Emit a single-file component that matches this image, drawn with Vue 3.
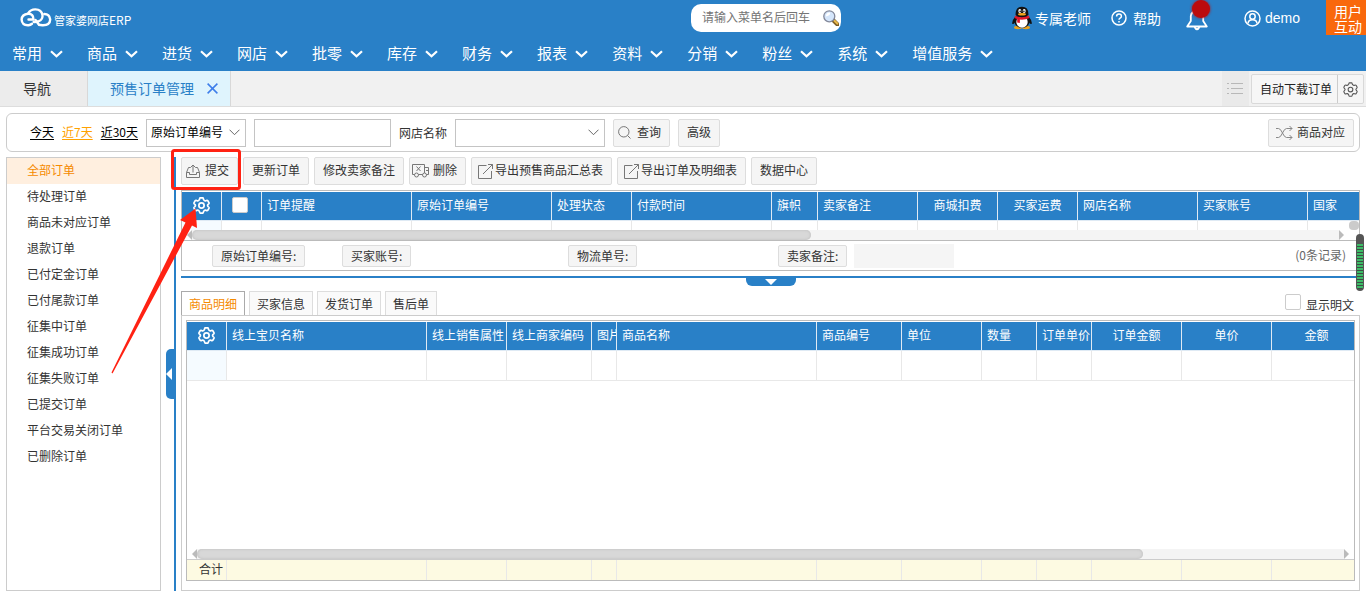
<script setup>
import { ref } from 'vue'

const menus = ['常用', '商品', '进货', '网店', '批零', '库存', '财务', '报表', '资料', '分销', '粉丝', '系统', '增值服务']

const statuses = [
  '全部订单', '待处理订单', '商品未对应订单', '退款订单', '已付定金订单', '已付尾款订单',
  '征集中订单', '征集成功订单', '征集失败订单', '已提交订单', '平台交易关闭订单', '已删除订单'
]
const activeStatus = ref('全部订单')

const orderColumns = [
  { title: '订单提醒', cls: 'w150' },
  { title: '原始订单编号', cls: 'w140' },
  { title: '处理状态', cls: 'w80' },
  { title: '付款时间', cls: 'w140' },
  { title: '旗帜', cls: 'w46' },
  { title: '卖家备注', cls: 'w100' },
  { title: '商城扣费', cls: 'w80', center: true },
  { title: '买家运费', cls: 'w80', center: true },
  { title: '网店名称', cls: 'w120' },
  { title: '买家账号', cls: 'w110' },
  { title: '国家', cls: 'w90' }
]

const detailColumns = [
  { title: '线上宝贝名称', cls: 'w200' },
  { title: '线上销售属性', cls: 'w80' },
  { title: '线上商家编码', cls: 'w85' },
  { title: '图片', cls: 'w25' },
  { title: '商品名称', cls: 'w200' },
  { title: '商品编号', cls: 'w85' },
  { title: '单位', cls: 'w80' },
  { title: '数量', cls: 'w55' },
  { title: '订单单价', cls: 'w55' },
  { title: '订单金额', cls: 'w90', center: true },
  { title: '单价', cls: 'w90', center: true },
  { title: '金额', cls: 'w90', center: true }
]

const detailTabs = ['商品明细', '买家信息', '发货订单', '售后单']
const activeTab = ref('商品明细')
const gearPath = 'M7.500 1H10.500Q11 1 11.200 2.800Q12.200 4.500 14 3.800Q15.200 3.300 15.700 4L17 6.300Q17.200 7 16 7.800Q14.900 9 16 10.200Q17.200 11 17 11.700L15.700 14Q15.200 14.700 14 14.200Q12.200 13.500 11.200 15.200Q11 17 10.500 17H7.500Q7 17 6.800 15.200Q5.800 13.500 4 14.200Q2.800 14.700 2.300 14L1 11.700Q.8 11 2 10.200Q3.100 9 2 7.800Q.8 7 1 6.300L2.300 4Q2.800 3.300 4 3.800Q5.800 4.500 6.800 2.800Q7 1 7.500 1Z'
</script>

<template>
  <div class="page">
    <header class="header">
      <div class="top">
        <a class="brand" href="#">
          <svg width="32" height="20" viewBox="0 0 32 20" fill="none" stroke="#fff" stroke-width="2.400" stroke-linecap="round">
            <path d="M8.500 11.500H13.500Q13.500 5.500 8 5.800Q2 6.400 1.600 11.500Q2 17.500 8.500 17.200Q10.500 17 12 15.800" />
            <path d="M8.200 5.400Q10.500 1.300 15.400 1.400Q21.500 1.600 22.500 7Q23 11.500 18.800 13.200Q15 14.600 13.600 14" />
            <path d="M15.500 12 19 16.800 22.500 17.200Q30 17.400 30.200 11.500Q29.600 6 24.300 6" />
          </svg>
          <span>管家婆网店<b>ERP</b></span>
        </a>
        <div class="finder">
          <input type="text" placeholder="请输入菜单名后回车" aria-label="菜单搜索">
          <button aria-label="搜索">
            <svg width="16" height="16" viewBox="0 0 16 16">
              <path d="m10.500 10.500 4 4" stroke="#7a5b24" stroke-width="4" stroke-linecap="round" />
              <path d="m11.500 10.800 2.800 2.700" stroke="#e9b84a" stroke-width="2.200" stroke-linecap="round" />
              <circle cx="6.300" cy="6.300" r="5.500" fill="#d5e6fb" stroke="#83889a" stroke-width="1.300" />
              <path d="M3 6.500A3.500 3.500 0 0 1 7 2.600Q8 5.500 3 6.500Z" fill="#fff" />
            </svg>
          </button>
        </div>
        <div class="account">
          <a href="#" class="teacher">
            <svg width="20" height="24" viewBox="0 0 20 24">
              <ellipse cx="6" cy="21.500" rx="4" ry="1.700" fill="#eca21c" />
              <ellipse cx="14" cy="21.500" rx="4" ry="1.700" fill="#eca21c" />
              <path d="M3 11Q-.5 15 .4 18Q1.500 18.500 3 16.500ZM17 11Q20.500 15 19.600 18Q18.500 18.500 17 16.500Z" fill="#111" />
              <ellipse cx="10" cy="15" rx="7.600" ry="7" fill="#111" />
              <ellipse cx="10" cy="16" rx="5.700" ry="5.800" fill="#fff" />
              <path d="M3.600 9Q3.200 .8 10 .8Q16.800 .8 16.400 9Q13 12 10 12Q7 12 3.600 9Z" fill="#111" />
              <ellipse cx="7.800" cy="5" rx="1.500" ry="2" fill="#fff" /><ellipse cx="12.200" cy="5" rx="1.500" ry="2" fill="#fff" />
              <circle cx="8.200" cy="5.200" r=".8" /><circle cx="11.900" cy="5.200" r=".8" />
              <ellipse cx="10" cy="8.300" rx="4" ry="1.200" fill="#f4a51c" />
              <path d="M3 9.500Q10 13 17 9.500L17.500 12Q10 15.500 2.500 12Z" fill="#e3162a" />
              <path d="M5.200 12.500 8 13.300 7.800 17 5.200 16.500Z" fill="#e3162a" />
            </svg>
            专属老师
          </a>
          <a href="#" class="help">
            <svg width="16" height="16" viewBox="0 0 16 16" fill="none" stroke="#fff" stroke-width="1.500">
              <circle cx="8" cy="8" r="7" />
              <path d="M5.600 6.400Q5.600 4 8 4Q10.400 4 10.400 6.200Q10.400 7.300 9.100 8.100Q8 8.800 8 9.800M8 11v1.600" />
            </svg>
            帮助
          </a>
          <a href="#" class="bell" aria-label="消息">
            <svg width="22" height="22" viewBox="0 0 22 22" fill="none" stroke="#fff" stroke-width="1.800" stroke-linejoin="round">
              <path d="M1.200 17.500 4.800 12V7Q5.500 2 11 2Q16.500 2 17.200 7V12L20.800 17.500Z" />
              <path d="M8.500 18Q11 22.500 13.500 18" />
            </svg>
            <i></i>
          </a>
          <a href="#" class="user">
            <svg width="17" height="17" viewBox="0 0 17 17" fill="none" stroke="#fff" stroke-width="1.500">
              <circle cx="8.500" cy="8.500" r="7.500" /><circle cx="8.500" cy="6.500" r="2.700" />
              <path d="M4 13.500Q4.300 9.700 8.500 9.700Q12.700 9.700 13 13.500" />
            </svg>
            demo
          </a>
          <a href="#" class="interact">用户互动</a>
        </div>
      </div>
      <nav class="menu">
        <a v-for="m in menus" :key="m" href="#">
          {{ m }}
          <svg width="13" height="8" viewBox="0 0 13 8" fill="none" stroke="#fff" stroke-width="2.200"><path d="m1 1.200 5.500 5L12 1.200" /></svg>
        </a>
      </nav>
    </header>

    <div class="pagetabs">
      <a class="ptab" href="#">导航</a>
      <div class="ptab current">
        <a href="#">预售订单管理</a>
        <button aria-label="关闭">
          <svg width="11" height="11" viewBox="0 0 11 11" stroke="#3d7eea" stroke-width="1.500"><path d="m.6.600 9.800 9.800M10.400.600.600 10.400" /></svg>
        </button>
      </div>
      <button class="list" aria-label="列表">
        <svg width="16" height="11" viewBox="0 0 16 11" stroke="#b8b8b8"><path d="M0 .5h2M4 .5h12M0 5.500h2M4 5.500h12M0 10.500h2M4 10.500h12" /></svg>
      </button>
      <div class="auto">
        <button>自动下载订单</button>
        <button class="gear" aria-label="设置">
          <svg width="15" height="15" viewBox="0 0 18 18" fill="none" stroke="#555" stroke-width="1.300" stroke-linejoin="round"><path :d="gearPath" /><circle cx="9" cy="9" r="2.800" /></svg>
        </button>
      </div>
    </div>

    <form class="query" @submit.prevent>
      <a href="#">今天</a>
      <a href="#" class="on">近7天</a>
      <a href="#">近30天</a>
      <div class="pick short">
        <select aria-label="查询字段"><option>原始订单编号</option></select>
        <svg width="11" height="7" viewBox="0 0 11 7" fill="none" stroke="#666"><path d="m.5.700 5 5 5-5" /></svg>
      </div>
      <input class="keyword" type="text" aria-label="查询内容">
      <label for="shop">网店名称</label>
      <div class="pick">
        <select id="shop"><option></option></select>
        <svg width="11" height="7" viewBox="0 0 11 7" fill="none" stroke="#666"><path d="m.5.700 5 5 5-5" /></svg>
      </div>
      <button class="btn search">
        <svg width="13" height="13" viewBox="0 0 13 13" fill="none" stroke="#777"><circle cx="5.800" cy="5.800" r="5.200" /><path d="m9.500 9.500 3 3" /></svg>
        查询
      </button>
      <button class="btn" type="button">高级</button>
      <button class="btn match" type="button">
        <svg width="17" height="14" viewBox="0 0 17 14" fill="none" stroke="#888"><path d="M0 2.500H2.500Q4.500 2.500 6.500 7Q8.500 11.500 10.500 11.500H16M0 11.500H2.500Q4.500 11.500 6.500 7Q8.500 2.500 10.500 2.500H16M13.500 0 16 2.500 13.500 5M13.500 9 16 11.500 13.500 14" /></svg>
        商品对应
      </button>
    </form>

    <div class="body">
      <aside class="side">
        <a v-for="s in statuses" :key="s" href="#" :class="{ on: s === activeStatus }" @click.prevent="activeStatus = s">{{ s }}</a>
      </aside>
      <div class="vsplit">
        <button aria-label="收起侧栏"><svg width="6" height="12" viewBox="0 0 6 12"><path d="M6 0v12L0 6Z" fill="#fff" /></svg></button>
      </div>

      <main class="main">
        <div class="toolbar">
          <button class="btn submit">
            <svg width="14" height="14" viewBox="0 0 14 14" fill="none" stroke="#777"><path d="M4.500 3.500H2.500L.500 8.500V13.500H13.500V8.500L11.500 3.500H9.500M.500 8.500H3.500V10.500H10.500V8.500H13.500M7 8.500V1M4.500 3.500 7 1l2.500 2.500" /></svg>
            提交
          </button>
          <button class="btn">更新订单</button>
          <button class="btn">修改卖家备注</button>
          <button class="btn remove">
            <svg width="18" height="14" viewBox="0 0 18 14" fill="none" stroke="#777"><path d="M2.500 10.500H.500V.500H12.500V9M12.500 3.500H16.500V10.500H14.500M4.500 2.500l4 4.500M8.500 2.500l-4 4.500M14 6.500h2.500M6.500 10.500h4" /><circle cx="4.500" cy="11" r="2" /><circle cx="12.500" cy="11" r="2" /></svg>
            删除
          </button>
          <button v-for="t in ['导出预售商品汇总表', '导出订单及明细表']" :key="t" class="btn export">
            <svg width="15" height="15" viewBox="0 0 15 15" fill="none" stroke="#777"><path d="M8.500 1.500H.500V14.500H13.500V7M5 10 14.500.500M10 .500H14.500V5" /></svg>
            {{ t }}
          </button>
          <button class="btn">数据中心</button>
        </div>

        <section class="grid orders">
          <div class="clip">
            <table>
              <thead>
                <tr>
                  <th class="w40"><svg width="17" height="17" viewBox="0 0 18 18" fill="none" stroke="#fff" stroke-width="1.800" stroke-linejoin="round"><path :d="gearPath" /><circle cx="9" cy="9" r="2.800" /></svg></th>
                  <th class="w40"><input type="checkbox" aria-label="全选"></th>
                  <th v-for="c in orderColumns" :key="c.title" :class="[c.cls, { mid: c.center }]">{{ c.title }}</th>
                </tr>
              </thead>
              <tbody><tr><td class="lead"></td><td></td><td v-for="c in orderColumns" :key="c.title"></td></tr></tbody>
            </table>
            <span class="vthumb"></span>
          </div>
          <div class="hscroll">
            <i class="left"></i><div class="track"><div class="thumb"></div></div><i class="right"></i>
          </div>
        </section>
        <div class="info">
          <div><button class="btn">原始订单编号:</button></div>
          <div><button class="btn">买家账号:</button></div>
          <div><button class="btn">物流单号:</button></div>
          <div class="memo"><label class="btn" for="memo">卖家备注:</label><input id="memo" type="text"></div>
          <span>(0条记录)</span>
        </div>

        <div class="hsplit">
          <button aria-label="收起明细"><svg width="12" height="6" viewBox="0 0 12 6"><path d="M0 0h12L6 6Z" fill="#fff" /></svg></button>
        </div>

        <div class="dtabs">
          <button v-for="t in detailTabs" :key="t" :class="{ on: t === activeTab }" @click="activeTab = t">{{ t }}</button>
          <label><input type="checkbox"><span>显示明文</span></label>
        </div>
        <section class="panel">
          <div class="grid detail">
            <div class="clip">
              <table>
                <thead>
                  <tr>
                    <th class="w40"><svg width="17" height="17" viewBox="0 0 18 18" fill="none" stroke="#fff" stroke-width="1.800" stroke-linejoin="round"><path :d="gearPath" /><circle cx="9" cy="9" r="2.800" /></svg></th>
                    <th v-for="c in detailColumns" :key="c.title" :class="[c.cls, { mid: c.center }]">{{ c.title }}</th>
                  </tr>
                </thead>
                <tbody><tr><td class="lead"></td><td v-for="c in detailColumns" :key="c.title"></td></tr></tbody>
              </table>
            </div>
            <div class="hscroll">
              <i class="left"></i><div class="track"><div class="thumb"></div></div><i class="right"></i>
            </div>
            <div class="total">
              <table>
                <tbody><tr><td class="w40">合计</td><td v-for="c in detailColumns" :key="c.title" :class="c.cls"></td></tr></tbody>
              </table>
            </div>
          </div>
        </section>
      </main>
    </div>

    <div class="meter"></div>
    <svg class="marks" width="245" height="380" viewBox="0 0 245 380">
      <rect x="172.500" y="150.500" width="67" height="38" rx="2" fill="none" stroke="#ff2213" stroke-width="3" />
      <path d="M195.500 208.500 197 228 192 225.500 112.500 373.500 111.500 372.500 185.500 222.500 180 220Z" fill="#ff2213" />
    </svg>
  </div>
</template>

<style>
body {
  margin: 0;
  background: #fff;
}
</style>

<style scoped>
.page {
  position: relative;
  display: flex;
  flex-direction: column;
  min-height: 100vh;
  overflow: hidden;
  font: 12px/18px "Noto Sans CJK SC", "Liberation Sans", sans-serif;
  color: #333;
}
.page *, .page { box-sizing: border-box; }
a { color: inherit; text-decoration: none; }
button, input, select { font: inherit; color: inherit; margin: 0; padding: 0; border: 0; background: none; }
button { white-space: nowrap; }
svg { display: block; flex: none; }

.header { background: #2980c7; color: #fff; }
.top { display: grid; grid-template-columns: 691fr 150px 525fr; height: 36px; }
.brand { display: flex; align-items: center; gap: 2px; padding-left: 20px; font-size: 11px; }
.brand span { padding-top: 3px; }
.brand b { font-size: 12px; font-weight: 400; }
.finder { display: flex; align-items: center; height: 28px; margin-top: 4px; padding: 0 2px 0 11px; border-radius: 10px; background: #fff; }
.finder input { flex: 1; min-width: 0; padding-bottom: 2px; color: #333; outline: 0; }
.finder input::placeholder { color: #757575; opacity: 1; }
.account { display: flex; align-items: flex-start; justify-content: flex-end; font-size: 14px; line-height: 20px; white-space: nowrap; }
.account a { display: flex; align-items: center; }
.teacher { gap: 3px; margin: 6px 20px 0 0; }
.help { gap: 6px; margin: 8px 25px 0 0; }
.account .bell { position: relative; margin: 9px 36px 0 0; }
.bell i { position: absolute; left: 6px; top: -9px; width: 18px; height: 18px; border-radius: 50%; background: #bb0b0d; box-shadow: 0 0 3px #bb0b0d; }
.user { gap: 4px; margin: 8px 26px 0 0; font-family: "Liberation Sans", sans-serif; }
.account .interact { display: block; width: 40px; height: 35px; padding: 4px 3px 0 8px; line-height: 15px; white-space: normal; background: #f9680c; }
.menu { display: flex; gap: 24px; height: 35px; padding: 0 0 2px 12px; font-size: 15px; line-height: 31px; white-space: nowrap; }
.menu a { display: flex; align-items: center; gap: 8px; }
.menu svg { margin-top: 2px; }

.pagetabs { display: flex; height: 36px; background: #f1f1f1; border-bottom: 1px solid #ddd; font-size: 14px; }
.ptab { display: flex; align-items: center; padding: 0 36px 2px 23px; background: #ececec; border-right: 1px solid #d8d8d8; }
.current { gap: 13px; padding: 0 12px 2px 22px; background: #dff4fd; color: #2980c7; }
.current svg { margin-top: 2px; }
.list { display: flex; align-items: center; justify-content: center; width: 27px; margin-left: auto; background: #eaeaea; }
.auto { display: flex; height: 30px; margin: 3px 2px 0; border: 1px solid #d9d9d9; border-radius: 2px; background: #f6f6f6; font-size: 12px; color: #222; }
.auto button { padding: 0 5px 0 8px; }
.auto .gear { padding: 0 5px; border-left: 1px solid #ccc; }

.query { display: flex; align-items: center; gap: 8px; height: 39px; margin: 6px 6px 5px; padding: 0 5px 0 23px; border: 1px solid #ccc; border-radius: 6px; white-space: nowrap; }
.query > a { padding-bottom: 2px; color: #000; text-decoration: underline; text-underline-offset: 2px; }
.query > a.on { color: #ffa200; }
.pick { position: relative; width: 150px; }
.short { width: 100px; }
.pick select { display: block; width: 100%; height: 28px; padding: 0 3px 2px 4px; border: 1px solid #c4c4c4; appearance: none; background: #fff; color: #000; }
.pick svg { position: absolute; right: 6px; top: 10px; pointer-events: none; }
.keyword { width: 137px; height: 28px; border: 1px solid #c4c4c4; }
.btn { display: flex; align-items: center; height: 28px; padding: 0 8px 2px; border: 1px solid #ddd; border-radius: 2px; background: #f5f5f5; }
.btn svg { margin-top: 2px; }
.search { gap: 6px; padding-left: 4px; }
.match { gap: 4px; margin-left: auto; padding-left: 7px; }

.body { display: flex; flex: 1; padding: 0 6px 6px; }
.side { width: 155px; border: 1px solid #ccc; }
.side a { display: block; padding: 0 0 2px 20px; line-height: 24px; }
.side a.on { background: #ffefdf; color: #f58a00; }
.vsplit { position: relative; width: 2px; margin: 0 5px 0 13px; background: #2980c7; }
.vsplit button { position: absolute; right: 2px; top: 192px; width: 8px; height: 50px; border-radius: 5px 0 0 5px; background: #2980c7; }
.main { display: flex; flex: 1; flex-direction: column; min-width: 0; }
.toolbar { display: flex; gap: 5px; margin-bottom: 5px; }
.submit { gap: 5px; padding-left: 4px; }
.remove { gap: 3px; padding-left: 2px; }
.export { gap: 2px; padding-left: 6px; }

.grid { display: flex; flex-direction: column; border: 1px solid #bbb; }
.clip { position: relative; padding-top: 1px; overflow: hidden; }
.orders .clip { height: 39px; }
table { width: 100%; border-spacing: 0; table-layout: fixed; }
.orders table { width: 1216px; }
.detail table { width: 1175px; }
th, td { height: 30px; padding: 0 0 2px 5px; overflow: hidden; text-align: left; white-space: nowrap; border-right: 1px solid #e8e8e8; border-bottom: 1px solid #e8e8e8; }
th { height: 29px; font-weight: 400; color: #fff; background: #2980c7; border-color: #dfeaf4; }
th input, .dtabs input { display: block; appearance: none; width: 16px; height: 16px; border: 1px solid #ccc; border-radius: 2px; background: #fff; }
th input { margin-left: 5px; }
th svg { margin-left: 6px; }
th.mid { padding-left: 0; text-align: center; }
.lead { background: #f5fbff; }
.w25 { width: 25px; }
.w40 { width: 40px; }
.w46 { width: 46px; }
.w55 { width: 55px; }
.w80 { width: 80px; }
.w85 { width: 85px; }
.w90 { width: 90px; }
.w100 { width: 100px; }
.w110 { width: 110px; }
.w120 { width: 120px; }
.w140 { width: 140px; }
.w150 { width: 150px; }
.w200 { width: 200px; }
.vthumb { position: absolute; right: 0; bottom: 0; width: 10px; height: 9px; border-radius: 4px; background: #cbcbcb; }
.hscroll { display: flex; height: 10px; padding: 0 15px 0 5px; }
.detail .hscroll { margin-top: auto; padding-right: 5px; }
.hscroll i { border: solid transparent; border-width: 5px 0; }
.hscroll .left { border-right: 5px solid #bbb; }
.hscroll .right { border-left: 5px solid #bbb; }
.track { flex: 1; background: #f4f4f4; }
.thumb { width: 54%; height: 10px; border-radius: 5px; background: #d8d8d8; box-shadow: inset 0 0 3px #bbb; }
.detail .thumb { width: 82.500%; }

.info { display: grid; grid-template-columns: 130px 226px 210px 1fr auto; align-items: center; height: 30px; padding: 0 13px 0 30px; border: solid #bbb; border-width: 0 1px 1px; white-space: nowrap; }
.info .btn { height: 22px; padding-bottom: 0; }
.memo { display: flex; align-items: center; gap: 7px; }
.memo input { width: 100px; height: 24px; background: #f5f5f5; }
.info span { padding-bottom: 2px; color: #666; }

.hsplit { position: relative; height: 2px; margin: 5px 0 13px; background: #2980c7; }
.hsplit button { position: absolute; left: calc(50% - 25px); top: 2px; display: flex; justify-content: center; width: 50px; height: 8px; margin-left: -1px; padding-top: 1px; border-radius: 0 0 6px 6px; background: #2980c7; transform: translateX(0); }
.hsplit button { left: 48%; }

.dtabs { display: flex; gap: 4px; height: 24px; }
.dtabs button { padding: 0 7px; border: 1px solid #ddd; border-bottom: 0; background: #fafafa; }
.dtabs button.on { border-color: #aaa; background: #fff; color: #f58a00; }
.dtabs label { display: flex; align-items: flex-start; gap: 5px; margin: 3px 6px 0 auto; }
.dtabs label span { padding-top: 2px; }
.panel { display: flex; flex: 1; flex-direction: column; padding: 4px 4px 9px; border: 1px solid #ccc; }
.detail { flex: 1; }
.total { overflow: hidden; border-top: 1px solid #ccc; background: #fdfae2; }
.total td { height: 20px; border-bottom: 0; }
.total td:first-child { padding: 0 3px 2px 0; text-align: right; }

.meter { position: absolute; right: 2px; top: 234px; width: 8px; height: 57px; border: solid #555; border-width: 10px 1px 2px; border-radius: 4px; background: repeating-linear-gradient(#3dbb67 0 2px, #3d4f45 2px 3px); }
.marks { position: absolute; left: 0; top: 0; pointer-events: none; }
</style>
